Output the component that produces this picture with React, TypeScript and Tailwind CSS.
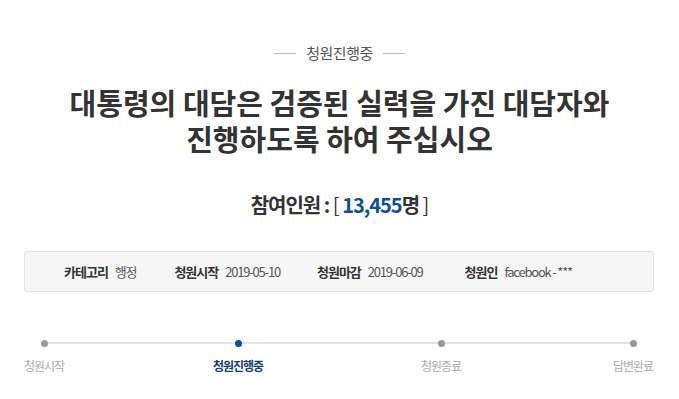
const font = "font-['Noto_Sans_CJK_KR','Noto_Sans',sans-serif]";

const info = [
  { label: "카테고리", value: "행정" },
  { label: "청원시작", value: "2019-05-10" },
  { label: "청원마감", value: "2019-06-09" },
  { label: "청원인", value: "facebook - ***" },
];

const steps = [
  { name: "청원시작", active: false, gap: "" },
  { name: "청원진행중", active: true, gap: "ml-[134px]" },
  { name: "청원종료", active: false, gap: "ml-[143px]" },
  { name: "답변완료", active: false, gap: "ml-[132px]" },
];

export default function App() {
  return (
    <div className={`${font} w-[679px] h-[399px] bg-white text-[#333] overflow-hidden`}>
      {/* 상태 */}
      <div className="pt-[43px] flex items-center justify-center gap-[10px]">
        <span className="w-[22px] h-px bg-[#bbb]" />
        <span className="text-[15px] leading-[20px] text-[#555] tracking-[-0.5px]">청원진행중</span>
        <span className="w-[22px] h-px bg-[#bbb]" />
      </div>

      {/* 제목 */}
      <h1 className="mt-[21px] text-center text-[29px] leading-[36px] font-bold text-[#333]">
        대통령의 대담은 검증된 실력을 가진 대담자와
        <br />
        진행하도록 하여 주십시오
      </h1>

      {/* 참여인원 */}
      <p className="mt-[35px] text-center text-[20px] leading-[28px] font-bold tracking-[-1px] text-[#333]">
        참여인원 : <span className="font-normal">[</span>{" "}
        <span className="text-[#0b4ea2]">13,455</span>명{" "}
        <span className="font-normal">]</span>
      </p>

      {/* 정보 */}
      <div className="mt-[32px] ml-[24px] mr-[25px] h-[41px] rounded-[3px] border border-[#e3e3e3] bg-[#f6f6f6] flex items-center pl-[39px]">
        {info.map((item, i) => (
          <div
            key={item.label}
            className={`flex items-center gap-[7px] ${i === 0 ? "" : i === 1 ? "ml-[38px]" : i === 2 ? "ml-[37px]" : "ml-[42px]"}`}
          >
            <span className="text-[13px] font-bold tracking-[-1px] text-[#333]">{item.label}</span>
            <span className="text-[13px] tracking-[-1.2px] text-[#555]">{item.value}</span>
          </div>
        ))}
      </div>

      {/* 진행단계 */}
      <div className="relative mt-[48px] ml-[14px] flex">
        <div className="absolute left-[30px] w-[589px] top-[2px] h-[2px] bg-[#e4e4e4]" />
        {steps.map((s) => (
          <div key={s.name} className={`relative w-[60px] flex flex-col items-center ${s.gap}`}>
            <span
              className={`w-[7px] h-[7px] rounded-full ${s.active ? "bg-[#0b4ea2]" : "bg-[#999]"}`}
            />
            <span
              className={`mt-[11px] text-[12px] leading-[16px] tracking-[-1px] whitespace-nowrap ${
                s.active ? "font-bold text-[#153e7a]" : "text-[#aaa]"
              }`}
            >
              {s.name}
            </span>
          </div>
        ))}
      </div>
    </div>
  );
}
